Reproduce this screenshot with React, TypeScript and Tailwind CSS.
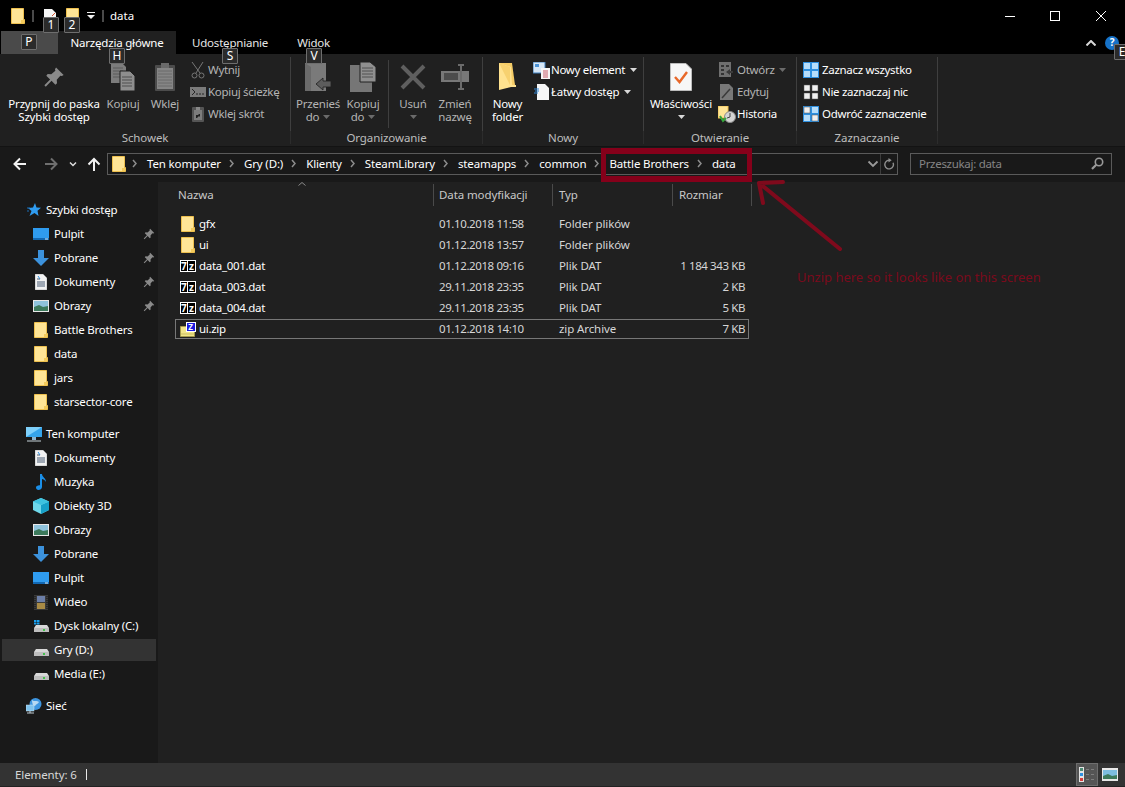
import type { ReactNode } from "react";

const FONT = "font-['Noto_Sans','Open_Sans',sans-serif]";

function Folder({ className = "" }: { className?: string }) {
  return (
    <svg width="14" height="16" viewBox="0 0 14 16" className={className}>
      <path d="M.5.5H12.5V11.5H13.5V15.5H.5Z" fill="#ffe596" stroke="#eec04e" />
      <path d="M10 15V12H13V15Z" fill="#f4cb5c" />
    </svg>
  );
}

function Pin({ size = 16, color = "#8a8a8a" }: { size?: number; color?: string }) {
  return (
    <svg width={size} height={size} viewBox="0 0 16 16">
      <path d="M9.500 1 15 6.500 13.700 7.300 12.600 7 10 10 10.200 12.600 9 13.600 6.200 10.800 2 15 1 14 5.200 9.800 2.400 7 3.400 5.800 6 6 9 3.400 8.700 2.300Z" fill={color} />
    </svg>
  );
}

function Copies({ w = 24, h = 28 }: { w?: number; h?: number }) {
  return (
    <svg width={w} height={h} viewBox="0 0 24 28">
      <path d="M0 0H11L15 4V20H0Z" fill="#7c7c7c" />
      <path d="M2 5H12M2 8H12M2 11H12M2 14H12" stroke="#5b5b5b" />
      <path d="M9 8H19L24 13V28H9Z" fill="#8e8e8e" stroke="#202020" />
      <path d="M11 14H21M11 17H21M11 20H21M11 23H21" stroke="#4e4e4e" />
    </svg>
  );
}

function Clipboard() {
  return (
    <svg width="20" height="28" viewBox="0 0 20 28">
      <rect x="0" y="2" width="20" height="26" rx="1" fill="#4c4c4c" />
      <rect x="2" y="5" width="16" height="21" fill="#858585" />
      <path d="M3 8H17M3 11H17M3 14H17M3 17H17M3 20H17M3 23H17" stroke="#6a6a6a" />
      <rect x="6" y="0" width="8" height="5" fill="#6a6a6a" />
    </svg>
  );
}

function Scissors() {
  return (
    <svg width="14" height="17" viewBox="0 0 14 17" fill="none" stroke="#777">
      <path d="M1 0 9 11M12 0 5 11" />
      <circle cx="3.500" cy="13.500" r="2.500" />
      <circle cx="10.500" cy="13.500" r="2.500" />
    </svg>
  );
}

function PathIcon() {
  return (
    <svg width="16" height="10" viewBox="0 0 16 10">
      <rect width="16" height="10" fill="#7b7b7b" />
      <path d="M2 2 5 5 2 8M6 7H8M9 7H11M12 7H14" stroke="#262626" fill="none" />
    </svg>
  );
}

function ShortcutIcon() {
  return (
    <svg width="12" height="15" viewBox="0 0 12 15">
      <rect width="12" height="15" rx="1" fill="#555" />
      <rect x="2" y="3" width="8" height="10" fill="#7d7d7d" />
      <rect x="4" y="0" width="4" height="3" fill="#888" />
      <path d="M4 11V8H7L6 7H8V10L7 9 5 11Z" fill="#222" />
    </svg>
  );
}

function MoveTo() {
  return (
    <svg width="26" height="28" viewBox="0 0 26 28">
      <path d="M0 0H21V28H0Z" fill="#7a7a7a" />
      <path d="M0 0 6 4V28H0Z" fill="#6a6a6a" />
      <path d="M11 21 18 15V18H26V24H18V27Z" fill="#5c5c5c" stroke="#202020" strokeWidth=".8" />
    </svg>
  );
}

function CopyTo() {
  return (
    <svg width="26" height="30" viewBox="0 0 26 30">
      <path d="M0 3H22V30H0Z" fill="#767676" />
      <path d="M10 0H20L26 5V20H10Z" fill="#8f8f8f" stroke="#202020" />
      <path d="M12 6H23M12 9H23M12 12H23M12 15H23" stroke="#505050" />
    </svg>
  );
}

function DeleteX() {
  return (
    <svg width="26" height="26" viewBox="0 0 26 26">
      <path d="M2 2 24 24M24 2 2 24" stroke="#5f5f5f" strokeWidth="4" />
    </svg>
  );
}

function Rename() {
  return (
    <svg width="28" height="26" viewBox="0 0 28 26">
      <rect x="0" y="7" width="28" height="11" fill="#787878" />
      <rect x="3" y="9" width="14" height="7" fill="#4c4c4c" />
      <path d="M17 1H23M20 1V25M17 25H23" stroke="#6b6b6b" strokeWidth="2" fill="none" />
    </svg>
  );
}

function NewFolder() {
  return (
    <svg width="19" height="28" viewBox="0 0 19 28">
      <path d="M1 0H14L17 22H1Z" fill="#f5cc66" />
      <path d="M1 0 13 4 14 22H18V24H13L1 27Z" fill="#ffe28f" />
      <path d="M1 0 12 4V22" fill="#f7d16f" />
    </svg>
  );
}

function NewItem() {
  return (
    <svg width="17" height="17" viewBox="0 0 17 17">
      <rect x="0" y="0" width="12" height="11" fill="#d7e8f7" stroke="#3f7fbc" />
      <rect x="2" y="2" width="4" height="3" fill="#4b93d6" />
      <rect x="8" y="6" width="9" height="11" fill="#f6f6f6" />
      <path d="M10 9H15M10 11H15M10 13H15M10 15H15" stroke="#c85e6c" />
    </svg>
  );
}

function EasyAccess() {
  return (
    <svg width="15" height="16" viewBox="0 0 15 16">
      <path d="M3 0H11L15 4V16H3Z" fill="#f6f6f6" />
      <path d="M0 5H5M1 7H5M0 9H4" stroke="#2e86d6" />
    </svg>
  );
}

function Properties() {
  return (
    <svg width="22" height="28" viewBox="0 0 22 28">
      <path d="M.5.5H16L21.500 6V27.500H.5Z" fill="#f7f7f7" stroke="#bcbcbc" />
      <path d="M5 14 9.500 19 17 9" fill="none" stroke="#e8682a" strokeWidth="2.400" />
    </svg>
  );
}

function OpenIcon() {
  return (
    <svg width="14" height="16" viewBox="0 0 14 16">
      <rect width="12" height="15" fill="#6f6f6f" />
      <path d="M2 3H5V5H2ZM7 3H10V5H7ZM2 7H5V9H2ZM2 11H5V13H2Z" fill="#333" />
      <path d="M7 10 11 7V9H14V11H11V13Z" fill="#3a3a3a" />
    </svg>
  );
}

function EditIcon() {
  return (
    <svg width="13" height="16" viewBox="0 0 13 16">
      <path d="M0 0H9L13 4V16H0Z" fill="#787878" />
      <path d="M2 14 10 5" stroke="#3a3a3a" strokeWidth="1.500" />
    </svg>
  );
}

function HistoryIcon() {
  return (
    <svg width="18" height="17" viewBox="0 0 18 17">
      <path d="M0 0H10V12H0Z" fill="#ffe596" stroke="#eec04e" />
      <circle cx="12" cy="11" r="5.500" fill="#d4d4d4" stroke="#8a8a8a" />
      <path d="M12 7V11L9 12" stroke="#444" fill="none" />
      <path d="M2 10 5 15 8 12" stroke="#35a63a" strokeWidth="2" fill="none" />
    </svg>
  );
}

function SelectGrid({ mode }: { mode: "all" | "none" | "invert" }) {
  const cells = [
    [0, 0],
    [8, 0],
    [0, 8],
    [8, 8],
  ] as const;
  const on = { all: [1, 1, 1, 1], none: [0, 0, 0, 0], invert: [0, 1, 1, 0] }[mode];
  return (
    <svg width="16" height="16" viewBox="0 0 16 16">
      {mode !== "none" && <rect width="16" height="16" fill="#2f90e0" />}
      {cells.map(([x, y], i) => (
        <rect
          key={i}
          x={x + 1}
          y={y + 1}
          width="6"
          height="6"
          fill={on[i] ? "#b6ddfa" : "#f0f0f0"}
          stroke={on[i] ? "none" : "#555"}
          strokeWidth=".5"
        />
      ))}
    </svg>
  );
}

function Desktop() {
  return (
    <svg width="16" height="12" viewBox="0 0 16 12">
      <rect width="16" height="12" fill="#2f9cf0" />
      <path d="M0 11H16" stroke="#1268b3" strokeWidth="2" />
      <path d="M12 11H15" stroke="#d9edfb" />
    </svg>
  );
}

function Download() {
  return (
    <svg width="16" height="16" viewBox="0 0 16 16">
      <path d="M5 0H11V8H16L8 16 0 8H5Z" fill="#3c92dc" />
    </svg>
  );
}

function DocIcon() {
  return (
    <svg width="12" height="16" viewBox="0 0 12 16">
      <path d="M0 0H8L12 4V16H0Z" fill="#f2f2f2" stroke="#8f8f8f" strokeWidth=".5" />
      <path d="M2 5H5M2 8H10M2 10H10M2 12H10" stroke="#4a5d74" />
      <path d="M3 2 5 5" stroke="#2f90e0" />
    </svg>
  );
}

function Pictures() {
  return (
    <svg width="16" height="12" viewBox="0 0 16 12">
      <rect width="16" height="12" fill="#e8e8e8" />
      <rect x="1" y="1" width="14" height="10" fill="#8fc3dc" />
      <path d="M1 7 6 5 10 7 15 6V11H1Z" fill="#3d7a5c" />
    </svg>
  );
}

function Star() {
  return (
    <svg width="14" height="14" viewBox="0 0 14 14">
      <path d="M8 0 9.500 4.600 14 4.800 10.500 7.800 11.500 13 7.500 10 2.500 13 4.500 8 1 5 6 4.600Z" fill="#2f9cf0" />
      <path d="M0 5H3M0 8H2" stroke="#1a6fb8" />
    </svg>
  );
}

function Monitor() {
  return (
    <svg width="16" height="15" viewBox="0 0 16 15">
      <rect width="16" height="10" fill="#7fd0fa" />
      <path d="M0 10 16 0V10Z" fill="#35a4ea" />
      <path d="M6 10H10V13H6Z" fill="#8eb5cc" />
      <path d="M1 14H15" stroke="#c6d3da" />
    </svg>
  );
}

function Music() {
  return (
    <svg width="11" height="16" viewBox="0 0 11 16">
      <path d="M4 0H6C6 3 10 4 10 8 9 6 7 5 6 5V13C6 15 4 16 2.500 16 1 16 0 15 0 13.500 0 12 2 11 4 11.300Z" fill="#1a8fe8" />
    </svg>
  );
}

function Cube() {
  return (
    <svg width="16" height="16" viewBox="0 0 16 16">
      <path d="M8 0 16 3.500V12L8 16 0 12V3.500Z" fill="#6fd8ea" />
      <path d="M8 7 16 3.500V12L8 16Z" fill="#17a0c8" />
      <path d="M8 0 16 3.500 8 7 0 3.500Z" fill="#3ec2df" />
    </svg>
  );
}

function Video() {
  return (
    <svg width="14" height="15" viewBox="0 0 14 15">
      <rect width="14" height="15" fill="#3a3a3a" />
      <rect x="3" y="1" width="8" height="6" fill="#6c7fa8" />
      <rect x="3" y="8" width="8" height="6" fill="#a88a45" />
      <path d="M1 1V14M13 1V14" stroke="#111" strokeDasharray="1 1" />
    </svg>
  );
}

function Drive({ win = false }: { win?: boolean }) {
  return (
    <svg width="15" height="12" viewBox="0 0 15 12">
      {win && <path d="M0 0H2.500V2H0ZM3 0H5.500V2H3ZM0 2.500H2.500V4.500H0ZM3 2.500H5.500V4.500H3Z" fill="#19a0f0" />}
      <path d="M2 5H13L15 8H0Z" fill="#d8d8d8" />
      <rect x="0" y="8" width="15" height="4" fill="#bdbdbd" />
      <rect x="9" y="9" width="2" height="2" fill="#42c14a" />
    </svg>
  );
}

function Globe() {
  return (
    <svg width="16" height="16" viewBox="0 0 16 16">
      <circle cx="9.500" cy="6" r="6" fill="#3d95e0" />
      <path d="M6 2C8 4 11 2 13 4 12 6 10 6 9 8 7 8 6 5 6 2Z" fill="#b7d9f2" />
      <rect x="0" y="7" width="8" height="6" fill="#7fc3ee" stroke="#d3e6f2" strokeWidth=".5" />
      <path d="M1 15H8M4 13V15" stroke="#bfcbd2" />
    </svg>
  );
}

// little archive badges, the letters stay real text
function SevenZip() {
  return (
    <div className="flex h-[12px] w-[16px] gap-px border border-white bg-white text-[10px] font-bold leading-none text-white">
      <span className="flex flex-1 items-center justify-center bg-black">7</span>
      <span className="flex flex-1 items-center justify-center bg-black">z</span>
    </div>
  );
}

function ZipFile() {
  return (
    <div className="relative h-[15px] w-[16px]">
      <svg width="15" height="13" viewBox="0 0 15 13" className="absolute bottom-0 left-0">
        <path d="M.5 2.500H14.500V12.500H.5Z" fill="#f0e48a" stroke="#a39a4c" />
        <path d="M1 10H14" stroke="#c9bd62" />
      </svg>
      <div className="absolute right-0 top-0 flex h-[10px] w-[10px] items-center justify-center border border-white bg-[#1a1ae0] text-[8px] font-bold leading-none text-white">
        Z
      </div>
    </div>
  );
}

function Chev({ className = "" }: { className?: string }) {
  return (
    <svg width="5" height="9" viewBox="0 0 5 9" fill="none" stroke="#8d8d8d" strokeWidth="1.500" className={className}>
      <path d="M1 1 4 4.500 1 8" />
    </svg>
  );
}

function Caret({ color = "#d8d8d8" }: { color?: string }) {
  return (
    <svg width="7" height="4" viewBox="0 0 7 4">
      <path d="M0 0H7L3.500 4Z" fill={color} />
    </svg>
  );
}

function KeyTip({ label, className }: { label: string; className: string }) {
  return (
    <div className={`absolute flex h-[16px] w-[16px] items-center justify-center rounded-[1px] border border-[#6e6e6e] bg-[#2b2b2b] text-[12px] leading-none text-white ${className}`}>
      {label}
    </div>
  );
}

function LargeButton({ icon, lines, width, grey = false, caret, className = "" }: { icon: ReactNode; lines: string[]; width: string; grey?: boolean; caret?: boolean; className?: string }) {
  return (
    <div className={`flex shrink-0 flex-col items-center ${width} ${className}`}>
      <div className="flex h-[40px] items-center justify-center">{icon}</div>
      <div className={`text-center text-[11.5px] leading-[13px] tracking-[-0.2px] whitespace-nowrap ${grey ? "text-[#b4b4b4]" : "text-white"}`}>
        {lines.map((l, i) => (
          <div key={i} className="flex h-[13px] items-center justify-center gap-1">
            {l}
            {caret && i === lines.length - 1 && <Caret color={grey ? "#6b6b6b" : "#d8d8d8"} />}
          </div>
        ))}
      </div>
    </div>
  );
}

function SmallButton({ icon, label, grey = false, caret, iconBox = "w-[19px]" }: { icon: ReactNode; label: string; grey?: boolean; caret?: "on" | "off"; iconBox?: string }) {
  return (
    <div className={`flex h-[22px] items-center text-[11.5px] tracking-[-0.3px] whitespace-nowrap ${grey ? "text-[#b4b4b4]" : "text-white"}`}>
      <div className={`flex shrink-0 items-center justify-center ${iconBox}`}>{icon}</div>
      <span>{label}</span>
      {caret && (
        <span className="ml-[5px]">
          <Caret color={caret === "on" ? "#d8d8d8" : "#6b6b6b"} />
        </span>
      )}
    </div>
  );
}

function Group({ width, label, children }: { width: string; label: string; children: ReactNode }) {
  return (
    <div className={`flex h-full shrink-0 flex-col ${width}`}>
      <div className="flex h-[74px] border-r border-[#3f3f3f]">{children}</div>
      <div className="flex h-[13px] items-center justify-center border-r border-[#2c2c2c] text-[11.5px] tracking-[-0.1px] text-[#bdbdbd]">
        {label}
      </div>
    </div>
  );
}

function Ribbon() {
  return (
    <div className="flex h-[92px] shrink-0 bg-[#202020] pt-[3px]">
      <Group width="w-[291px]" label="Schowek">
        <LargeButton width="w-[104px]" className="ml-[2px]" icon={<Pin size={22} />} lines={["Przypnij do paska", "Szybki dostęp"]} />
        <LargeButton width="w-[34px]" grey icon={<Copies />} lines={["Kopiuj"]} />
        <LargeButton width="w-[44px]" className="ml-[3px]" grey icon={<Clipboard />} lines={["Wklej"]} />
        <div className="ml-[2px] flex flex-col pt-[2px]">
          <SmallButton grey icon={<Scissors />} label="Wytnij" iconBox="w-[19px] pr-[2px]" />
          <SmallButton grey icon={<PathIcon />} label="Kopiuj ścieżkę" iconBox="w-[19px] pr-[2px]" />
          <SmallButton grey icon={<ShortcutIcon />} label="Wklej skrót" iconBox="w-[19px] pr-[2px]" />
        </div>
      </Group>
      <Group width="w-[192px]" label="Organizowanie">
        <LargeButton width="w-[46px]" className="ml-[4px]" grey caret icon={<MoveTo />} lines={["Przenieś", "do"]} />
        <LargeButton width="w-[44px]" grey caret icon={<CopyTo />} lines={["Kopiuj", "do"]} />
        <div className="my-[3px] ml-[3px] w-px bg-[#3f3f3f]" />
        <LargeButton width="w-[46px]" className="ml-[1px]" caret icon={<DeleteX />} lines={["Usuń", " "]} grey />
        <LargeButton width="w-[38px]" grey icon={<Rename />} lines={["Zmień", "nazwę"]} />
      </Group>
      <Group width="w-[161px]" label="Nowy">
        <LargeButton width="w-[49px]" icon={<NewFolder />} lines={["Nowy", "folder"]} />
        <div className="flex flex-col pt-[2px]">
          <SmallButton icon={<NewItem />} label="Nowy element" caret="on" iconBox="w-[19px] pr-[1px]" />
          <SmallButton icon={<EasyAccess />} label="Łatwy dostęp" caret="on" iconBox="w-[19px] pr-[1px]" />
        </div>
      </Group>
      <Group width="w-[153px]" label="Otwieranie">
        <LargeButton width="w-[74px]" icon={<Properties />} lines={["Właściwości", " "]} caret />
        <div className="flex flex-col pt-[2px]">
          <SmallButton grey icon={<OpenIcon />} label="Otwórz" caret="off" iconBox="w-[19px] pr-[3px]" />
          <SmallButton grey icon={<EditIcon />} label="Edytuj" iconBox="w-[19px] pr-[3px]" />
          <SmallButton icon={<HistoryIcon />} label="Historia" iconBox="w-[19px] pr-[1px]" />
        </div>
      </Group>
      <Group width="w-[141px]" label="Zaznaczanie">
        <div className="ml-[6px] flex flex-col pt-[2px]">
          <SmallButton icon={<SelectGrid mode="all" />} label="Zaznacz wszystko" iconBox="w-[19px] pr-[3px]" />
          <SmallButton icon={<SelectGrid mode="none" />} label="Nie zaznaczaj nic" iconBox="w-[19px] pr-[3px]" />
          <SmallButton icon={<SelectGrid mode="invert" />} label="Odwróć zaznaczenie" iconBox="w-[19px] pr-[3px]" />
        </div>
      </Group>
    </div>
  );
}

const CRUMBS = ["Ten komputer", "Gry (D:)", "Klienty", "SteamLibrary", "steamapps", "common", "Battle Brothers", "data"];

function AddressBar() {
  return (
    <div className="flex h-[32px] shrink-0 items-center border-t border-[#131313] bg-[#191919] pt-[2px]">
      <div className="flex w-[107px] shrink-0 items-center">
        <svg width="107" height="16" viewBox="0 0 107 16" fill="none">
          <path d="M26 8H15M20 2.500 14.500 8 20 13.500" stroke="#f2f2f2" strokeWidth="2" />
          <path d="M45 8H56M51 2.500 56.500 8 51 13.500" stroke="#6f6f6f" strokeWidth="2" />
          <path d="M70 6.500 73 9.500 76 6.500" stroke="#dedede" strokeWidth="1.500" />
          <path d="M94 15V3M88.500 8.500 94 3 99.500 8.500" stroke="#f2f2f2" strokeWidth="2" />
        </svg>
      </div>
      <div className="flex h-[22px] w-[791px] shrink-0 items-center border border-[#5a5a5a] text-[11.5px] text-white">
        <Folder className="ml-[4px] shrink-0" />
        <div className="ml-[-2px] flex items-center">
          {CRUMBS.map((c) => (
            <div key={c} className="flex items-center whitespace-nowrap">
              <Chev className="ml-[8px] mr-[10px]" />
              <span className="tracking-[-0.14px]">{c}</span>
            </div>
          ))}
        </div>
        <div className="ml-auto flex h-full items-center">
          <svg width="12" height="8" viewBox="0 0 12 8" fill="none" className="mr-[1px]">
            <path d="M1.500 1.500 6 6 10.500 1.500" stroke="#9a9a9a" strokeWidth="1.800" />
          </svg>
          <div className="flex h-full w-[17px] items-center justify-center border-l border-[#3d3d3d]">
            <svg width="12" height="12" viewBox="0 0 12 12" fill="none" stroke="#8f8f8f" strokeWidth="1.400">
              <path d="M6 2.300A4.300 4.300 0 1 0 10 4.700" />
              <path d="M5.500 0V4.500L8.700 2.200Z" fill="#8f8f8f" stroke="none" />
            </svg>
          </div>
        </div>
      </div>
      <div className="ml-[12px] flex h-[22px] w-[202px] shrink-0 items-center justify-between border border-[#5a5a5a] pl-[8px] pr-[7px] text-[11.5px] tracking-[-0.3px] text-[#858585]">
        <span>Przeszukaj: data</span>
        <svg width="13" height="13" viewBox="0 0 13 13" fill="none" stroke="#9a9a9a" strokeWidth="1.600">
          <circle cx="8" cy="5" r="3.700" />
          <path d="M5.200 7.800 1 12" strokeWidth="2.200" />
        </svg>
      </div>
    </div>
  );
}

function NavRow({ icon, label, pin, indent = false, selected = false }: { icon: ReactNode; label: string; pin?: boolean; indent?: boolean; selected?: boolean }) {
  return (
    <div className="flex h-[24px] flex-col justify-center px-[2px]">
      <div className={`flex h-[22px] items-center ${selected ? "bg-[#333333]" : ""}`}>
        <div className={`flex w-[16px] shrink-0 items-center justify-center ${indent ? "ml-[31px]" : "ml-[24px]"}`}>{icon}</div>
        <span className={`whitespace-nowrap text-[11.5px] tracking-[-0.2px] text-white ${indent ? "ml-[5px]" : "ml-[4px]"}`}>{label}</span>
        {pin && (
          <span className="ml-auto mr-[1px]">
            <Pin size={12} />
          </span>
        )}
      </div>
    </div>
  );
}

function Sidebar() {
  return (
    <div className="w-[158px] shrink-0 bg-[#191919] pt-[20px]">
      <NavRow icon={<Star />} label="Szybki dostęp" />
      <NavRow indent pin icon={<Desktop />} label="Pulpit" />
      <NavRow indent pin icon={<Download />} label="Pobrane" />
      <NavRow indent pin icon={<DocIcon />} label="Dokumenty" />
      <NavRow indent pin icon={<Pictures />} label="Obrazy" />
      <NavRow indent icon={<Folder />} label="Battle Brothers" />
      <NavRow indent icon={<Folder />} label="data" />
      <NavRow indent icon={<Folder />} label="jars" />
      <NavRow indent icon={<Folder />} label="starsector-core" />
      <div className="h-[8px]" />
      <NavRow icon={<Monitor />} label="Ten komputer" />
      <NavRow indent icon={<DocIcon />} label="Dokumenty" />
      <NavRow indent icon={<Music />} label="Muzyka" />
      <NavRow indent icon={<Cube />} label="Obiekty 3D" />
      <NavRow indent icon={<Pictures />} label="Obrazy" />
      <NavRow indent icon={<Download />} label="Pobrane" />
      <NavRow indent icon={<Desktop />} label="Pulpit" />
      <NavRow indent icon={<Video />} label="Wideo" />
      <NavRow indent icon={<Drive win />} label="Dysk lokalny (C:)" />
      <NavRow indent selected icon={<Drive />} label="Gry (D:)" />
      <NavRow indent icon={<Drive />} label="Media (E:)" />
      <div className="h-[8px]" />
      <NavRow icon={<Globe />} label="Sieć" />
    </div>
  );
}

const FILES = [
  { icon: <Folder />, name: "gfx", date: "01.10.2018 11:58", type: "Folder plików", size: "" },
  { icon: <Folder />, name: "ui", date: "01.12.2018 13:57", type: "Folder plików", size: "" },
  { icon: <SevenZip />, name: "data_001.dat", date: "01.12.2018 09:16", type: "Plik DAT", size: "1 184 343 KB" },
  { icon: <SevenZip />, name: "data_003.dat", date: "29.11.2018 23:35", type: "Plik DAT", size: "2 KB" },
  { icon: <SevenZip />, name: "data_004.dat", date: "29.11.2018 23:35", type: "Plik DAT", size: "5 KB" },
  { icon: <ZipFile />, name: "ui.zip", date: "01.12.2018 14:10", type: "zip Archive", size: "7 KB" },
];

function FileList() {
  return (
    <div className="relative flex-1 border-t-[4px] border-[#191919] bg-[#202020] pl-[17px] pt-[2px]">
      <svg width="8" height="4" viewBox="0 0 8 4" fill="none" stroke="#8a8a8a" className="absolute left-[140px] top-0">
        <path d="M.5 3.500 4 .5 7.500 3.500" />
      </svg>
      <div className="grid h-[22px] w-[577px] grid-cols-[258px_119px_120px_80px] text-[11.5px] tracking-[-0.1px] text-[#c8c8c8]">
        <div className="flex items-center pl-[3px]">Nazwa</div>
        <div className="flex items-center border-l border-[#4a4a4a] pl-[5px]">Data modyfikacji</div>
        <div className="flex items-center border-l border-[#4a4a4a] pl-[6px]">Typ</div>
        <div className="flex items-center border-x border-[#4a4a4a] pl-[6px]">Rozmiar</div>
      </div>
      <div className="mt-[8px] flex w-[574px] flex-col gap-px">
        {FILES.map((f) => (
          <div
            key={f.name}
            className={`grid h-[20px] grid-cols-[258px_119px_120px_77px] items-center text-[11.5px] text-[#d6d6d6] ${f.name === "ui.zip" ? "outline outline-1 -outline-offset-1 outline-[#777]" : ""}`}
          >
            <div className="flex items-center tracking-[-0.3px] text-white">
              <div className="ml-[4px] flex w-[17px] justify-center">{f.icon}</div>
              <span className="ml-[3px]">{f.name}</span>
            </div>
            <div className="pl-[6px] tracking-[-0.4px]">{f.date}</div>
            <div className="pl-[7px] tracking-[-0.1px]">{f.type}</div>
            <div className="pr-[4px] text-right tracking-[-0.4px]">{f.size}</div>
          </div>
        ))}
      </div>
    </div>
  );
}

function StatusBar() {
  return (
    <div className="flex h-[24px] shrink-0 items-center border-b border-[#222] bg-[#333333] pl-[15px] text-[11.5px] tracking-[-0.1px] text-[#d8d8d8]">
      <span>Elementy: 6</span>
      <div className="ml-[9px] h-[11px] w-px bg-[#e8e8e8]" />
      <div className="ml-auto mr-[7px] flex h-full items-center gap-[4px]">
        <div className="flex h-full w-[22px] items-center justify-center border border-[#6e6e6e] bg-[#555555]">
          <svg width="16" height="15" viewBox="0 0 16 15">
            <rect x="0" y="0" width="5" height="15" fill="#e4e4e4" />
            <rect x="1" y="1" width="3" height="3" fill="#4d8b74" />
            <rect x="1" y="6" width="3" height="3" fill="#2f90e0" />
            <rect x="1" y="11" width="3" height="3" fill="#d73a3a" />
            <path d="M7 2.500H10M12 2.500H15M7 7.500H10M12 7.500H15M7 12.500H10M12 12.500H15" stroke="#7e7e7e" />
          </svg>
        </div>
        <svg width="16" height="13" viewBox="0 0 16 13">
          <rect width="16" height="13" fill="#e8e8e8" />
          <rect x="1" y="2" width="14" height="9" fill="#7dbde0" />
          <path d="M1 8 6 6 10 8 15 7V11H1Z" fill="#3d7a5c" />
        </svg>
      </div>
    </div>
  );
}

function TitleBar() {
  return (
    <div className="flex h-[31px] shrink-0 items-center bg-black pl-[11px] text-[11.5px] text-white">
      <Folder />
      <div className="ml-[7px] h-[12px] w-[2px] bg-[#4a4a4a]" />
      <svg width="12" height="14" viewBox="0 0 12 14" className="ml-[10px]">
        <path d="M0 0H8L12 4V14H0Z" fill="#f6f6f6" />
        <path d="M8 7 11 4" stroke="#d9542b" />
      </svg>
      <div className="ml-[10px]">
        <Folder />
      </div>
      <svg width="8" height="7" viewBox="0 0 8 7" className="ml-[7px]">
        <path d="M0 0H8V1H0ZM0 3H8L4 7Z" fill="#f0f0f0" />
      </svg>
      <div className="ml-[7px] h-[12px] w-[2px] bg-[#4a4a4a]" />
      <span className="ml-[6px]">data</span>
      <div className="ml-auto flex items-center">
        <svg width="102" height="12" viewBox="0 0 102 12" fill="none" stroke="#fff" className="mr-[18px]">
          <path d="M0 6.500H10" />
          <rect x="45.500" y="1.500" width="9" height="9" />
          <path d="M91 1 101 11M101 1 91 11" />
        </svg>
      </div>
    </div>
  );
}

function TabRow() {
  return (
    <div className="flex h-[23px] shrink-0 items-stretch bg-black pl-[1px] text-[11.5px] tracking-[-0.2px] text-[#e6e6e6]">
      <div className="w-[57px] bg-[#4a4a4a]" />
      <div className="flex w-[118px] items-center justify-center bg-[#202020] text-white">Narzędzia główne</div>
      <div className="ml-[16px] flex items-center">Udostępnianie</div>
      <div className="ml-[29px] flex items-center">Widok</div>
      <div className="ml-auto mr-[6px] flex items-center gap-[9px]">
        <svg width="10" height="6" viewBox="0 0 10 6" fill="none" stroke="#d8d8d8" strokeWidth="2">
          <path d="M.5 5.500 5 1 9.500 5.500" />
        </svg>
        <div className="flex h-[14px] w-[14px] items-center justify-center rounded-full bg-[#1672c8] text-[10px] font-bold text-white">?</div>
      </div>
    </div>
  );
}

export default function App() {
  return (
    <div className={`relative flex h-[787px] w-[1125px] flex-col overflow-hidden bg-black ${FONT}`}>
      <TitleBar />
      <TabRow />
      <Ribbon />
      <AddressBar />
      <div className="flex min-h-0 flex-1">
        <Sidebar />
        <FileList />
      </div>
      <StatusBar />

      {/* shortcut hints over the ribbon */}
      <KeyTip label="1" className="left-[43px] top-[17px]" />
      <KeyTip label="2" className="left-[64px] top-[17px]" />
      <KeyTip label="P" className="left-[21px] top-[34px]" />
      <KeyTip label="H" className="left-[109px] top-[48px]" />
      <KeyTip label="S" className="left-[222px] top-[48px]" />
      <KeyTip label="V" className="left-[306px] top-[48px]" />
      <KeyTip label="E" className="left-[1114px] top-[44px]" />

      {/* red annotation drawn on top of the screenshot */}
      <div className="absolute left-[601px] top-[148px] h-[34px] w-[151px] border-x-[5px] border-y-[6px] border-[#85001a]" />
      <svg width="100" height="90" viewBox="0 0 100 90" fill="none" stroke="#7f0a1c" strokeWidth="4" strokeLinecap="round" className="absolute left-[750px] top-[175px]">
        <path d="M90 74 9 8M9 8 33 7M9 8 13 28" />
      </svg>
      <div className="absolute left-[797px] top-[268px] text-[13px] whitespace-nowrap text-[#7a0a1c]">Unzip here so it looks like on this screen</div>
    </div>
  );
}
